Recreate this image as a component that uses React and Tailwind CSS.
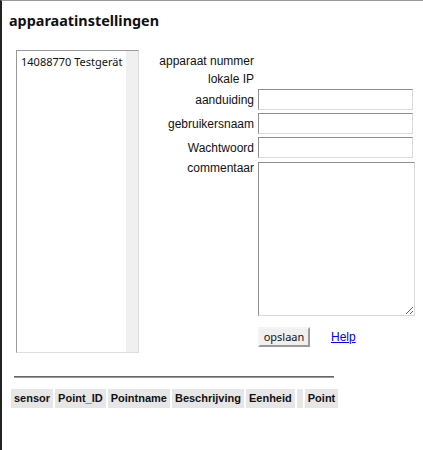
import React from "react";

const inputCls =
  "block w-[155px] h-[21px] border border-t-[#8f8f8f] border-l-[#8f8f8f] border-r-[#d9d9d9] border-b-[#d9d9d9] bg-white px-1 text-[12px] outline-none";

export default function App() {
  const columns = ["sensor", "Point_ID", "Pointname", "Beschrijving", "Eenheid", "", "Point"];

  return (
    <div className="w-[423px] h-[450px] bg-white border-l-2 border-l-[#222] border-t border-t-[#999] overflow-hidden font-['Liberation_Sans',Arial,sans-serif] text-[#111]">
      <h1 className="pl-[7px] pt-[11px] text-[14.4px] leading-[18px] font-bold font-['Noto_Sans',sans-serif]">
        apparaatinstellingen
      </h1>

      <div className="flex mt-[20px] pl-[14px]">
        {/* device list */}
        <div className="flex w-[123px] h-[303px] border border-t-[#999] border-l-[#999] border-r-[#ddd] border-b-[#ddd] bg-white">
          <div className="flex-1 pl-[4px] pt-[2px] text-[11px] leading-[17px] font-['Noto_Sans',sans-serif] whitespace-nowrap">
            14088770 Testgerät
          </div>
          <div className="w-[12px] h-full bg-[#f0f0f0]" />
        </div>

        {/* form */}
        <div className="ml-[5px] pt-[3px] text-[12px]">
          <div className="grid grid-cols-[110px_auto] gap-x-[4px] items-center">
            <div className="text-right leading-[17px]">apparaat nummer</div>
            <div />
            <div className="text-right leading-[17px] pt-[1px]">lokale IP</div>
            <div />
          </div>
          <div className="grid grid-cols-[110px_auto] gap-x-[4px] gap-y-[3px] items-center mt-[1px]">
            <div className="text-right">aanduiding</div>
            <input className={inputCls} />
            <div className="text-right">gebruikersnaam</div>
            <input className={inputCls} />
            <div className="text-right">Wachtwoord</div>
            <input className={inputCls} type="password" />
            <div className="text-right self-start leading-[14px]">commentaar</div>
            <textarea className="block w-[157px] h-[154px] mt-[1px] border border-t-[#8f8f8f] border-l-[#8f8f8f] border-r-[#d9d9d9] border-b-[#d9d9d9] bg-white text-[12px] outline-none resize" />
          </div>
          <div className="flex items-center mt-[11px] ml-[114px]">
            <button className="h-[20px] w-[52px] bg-[#efefef] border-2 border-t-[#f4f4f4] border-l-[#f4f4f4] border-r-[#999] border-b-[#999] text-[11px] leading-[14px] font-['Noto_Sans',sans-serif] text-[#111]">
              opslaan
            </button>
            <a href="#" className="ml-[21px] text-[12px] text-[#0000ee] underline">
              Help
            </a>
          </div>
        </div>
      </div>

      <div className="ml-[12px] mt-[23px] w-[320px] border-t border-t-[#666] border-b border-b-[#999]" />

      <table className="ml-[7px] mt-[9px] border-separate border-spacing-[2px]">
        <thead>
          <tr>
            {columns.map((c, i) => (
              <th
                key={i}
                className="bg-[#e6e6e6] px-[3px] py-[3px] text-[11px] leading-[13px] font-bold text-left"
              >
                {c}
              </th>
            ))}
          </tr>
        </thead>
      </table>
    </div>
  );
}
